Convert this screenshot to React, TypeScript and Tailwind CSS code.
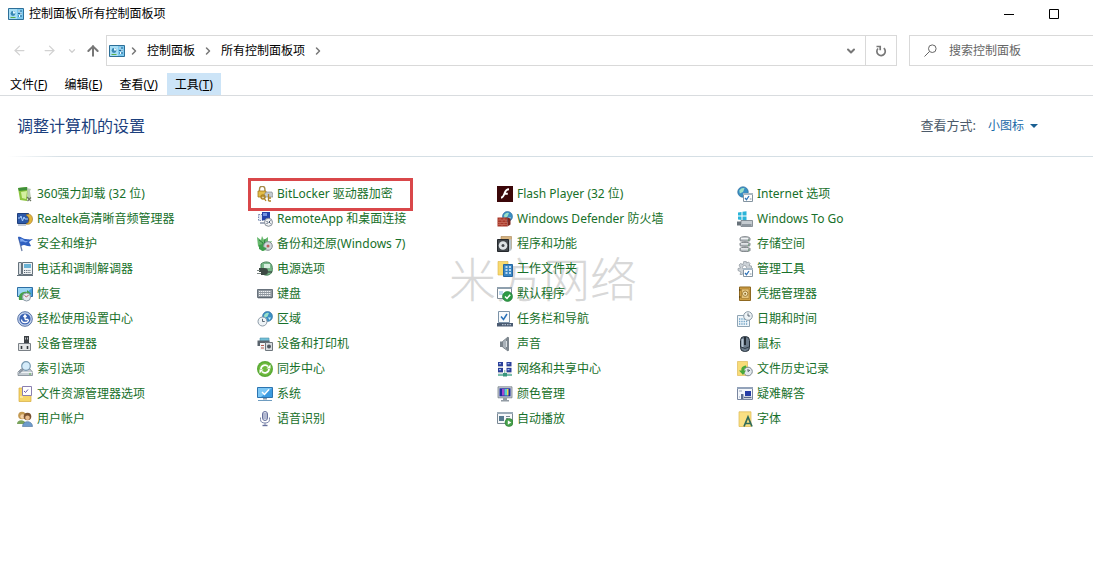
import type { ReactNode } from "react";
import { ArrowLeft, ArrowRight, ArrowUp, ChevronDown, ChevronRight } from "lucide-react";

interface PanelItem {
    name: string;
    icon: ReactNode;
    highlighted?: boolean;
}

/* Shared icon parts, all drawn on a 16x16 grid */
const Globe = ({ cx, cy, r }: { cx: number; cy: number; r: number }) => (
    <g>
        <circle cx={cx} cy={cy} r={r} fill="#3b8fc4" stroke="#2a6a98" strokeWidth="0.6" />
        <path d={`M${cx - r * 0.7} ${cy - r * 0.3}q${r * 0.5} ${-r * 0.6} ${r} ${-r * 0.4}l${-r * 0.3} ${r * 0.7}l${-r * 0.6} ${r * 0.3}z`} fill="#9be0c8" />
        <path d={`M${cx + r * 0.1} ${cy + r * 0.2}l${r * 0.6} 0l${-r * 0.3} ${r * 0.5}z`} fill="#c8eef5" />
    </g>
);

const Clock = ({ cx, cy, r }: { cx: number; cy: number; r: number }) => (
    <g>
        <circle cx={cx} cy={cy} r={r} fill="#eef3f6" stroke="#8b9aa6" strokeWidth="1" />
        <path d={`M${cx} ${cy - r * 0.6}V${cy}H${cx + r * 0.5}`} fill="none" stroke="#4b5a68" strokeWidth="0.9" />
    </g>
);

const CheckSheet = () => (
    <g>
        <path d="M6.5 7.5h9v8h-9z" fill="#fff" stroke="#8494a0" />
        <path d="M6 7h10v2H6z" fill="#a9b8c4" />
        <path d="M8 12l1.5 1.7L12 10" fill="none" stroke="#2c72b8" strokeWidth="1.2" />
        <path d="M12.8 13h1.7" stroke="#8494a0" />
    </g>
);

const ControlPanelIcon = () => (
    <svg viewBox="0 0 16 12" className="h-3 w-4 shrink-0">
        <path d="M.5.5h15v11H.5z" fill="#7cc8ee" stroke="#2d6f98" />
        <path d="M1 1h8v10H1z" fill="#a8def5" />
        <circle cx="5" cy="5.5" r="2.4" fill="#3988b4" />
        <path d="M5 5.5V3a2.5 2.5 0 0 1 2.4 2.5z" fill="#e8f8ff" />
        <path d="M10 3h4M10 5.5h4M10 8h4" stroke="#246590" strokeWidth="1.2" />
        <path d="M11 2v2M13 4.500v2M11.500 7v2" stroke="#fff" />
        <path d="M2.500 9.500h5" stroke="#5eb04c" />
    </svg>
);

const icons = {
    uninstall: (
        <>
            <path d="M1 2l9-1 1 4-1 10-7-1z" fill="#8cc63f" />
            <path d="M1 2l9-1 1 3-9 1z" fill="#3f8f3a" />
            <path d="M4 6l6-1-1 8-4-1z" fill="#d4f0a0" />
            <path d="M10 2l4 1-1 2 1 7-3 2z" fill="#b9cbb2" />
            <path d="M10 11l4 4M14 11.5L10.5 15" stroke="#69755f" strokeWidth="1.2" />
        </>
    ),
    realtek: (
        <>
            <path d="M.5 2.500h11v10H.5z" fill="#2d59a8" stroke="#1f3f7c" />
            <path d="M1 7h2l1-2 1.5 5L7 6l1 2h3" fill="none" stroke="#a9d0ff" />
            <path d="M9 4c3-2 6.500 0 6.500 4s-3 6-6.500 5c2-1 3-2 3-4S11 5 9 4z" fill="#e2b53c" stroke="#9a6f1c" strokeWidth="0.6" />
            <path d="M1 14h8" stroke="#8a97ad" />
        </>
    ),
    flag: (
        <>
            <path d="M1.500 1l3.500 14" stroke="#6a7ea8" strokeWidth="1.300" />
            <path d="M1 1c3-1 4 2 7 2 2 0 4 1 8 0l-4 3 2 4c-3 1-5-1-7-1S5 10 4 10z" fill="#2f5fc0" />
            <path d="M3 3c3-1 3 1 5 2 2 0 3 0 4-.5L9 6.500C6 6 6 5 3.500 6z" fill="#7fa8ee" />
        </>
    ),
    phone: (
        <>
            <path d="M1.500 1.500h3v12h-3z" fill="#d8dee3" stroke="#66727c" />
            <path d="M5.500 1.500h10v12h-10z" fill="#eef1f3" stroke="#66727c" />
            <path d="M7 3h7v4H7z" fill="#6bb3d6" />
            <path d="M7 9.500h7M7 11.500h7" stroke="#53616e" strokeDasharray="1.200 1" />
            <path d="M0 14.500h16" stroke="#66727c" />
        </>
    ),
    recovery: (
        <>
            <path d="M.5 1.500h15v9H.5z" fill="#4a9fdc" stroke="#2e6ea4" />
            <path d="M1 2h14L6 10H1z" fill="#9bd5f5" />
            <path d="M2 14c-1-5 2-9 8-8V4l4 3.500L10 11V9C7 8.500 5 10 6 14z" fill="#46a04a" />
            <circle cx="9.500" cy="11" r="4" fill="#e4ecef" stroke="#8b9aa6" />
            <path d="M7.500 9.500l2 1.500 2-2" fill="none" stroke="#b0565c" />
        </>
    ),
    ease: (
        <>
            <circle cx="8" cy="8" r="7.300" fill="#c9d7ef" stroke="#5570a4" />
            <circle cx="8" cy="8" r="5.600" fill="#3a62b4" />
            <path d="M8 4v4.500M6.500 6L8 4l1.500 2M4.500 8.500a3.500 3 0 0 0 7 0M8 8.500h3" fill="none" stroke="#fff" strokeWidth="1.300" />
        </>
    ),
    device: (
        <>
            <path d="M7 0h5v8H7z" fill="#3d4145" />
            <path d="M8.500 1.500v2M10.500 1.500v2" stroke="#b8bdc2" />
            <path d="M1.500 7.500h12v7h-12z" fill="#e3e5e6" stroke="#7a8086" />
            <path d="M4.500 10v3M10.500 10v3" stroke="#33383d" strokeWidth="1.600" fill="none" />
        </>
    ),
    indexing: (
        <>
            <path d="M1 11l3-3h9l2.500 3v3.500H1z" fill="#c4ccd2" stroke="#7b8790" strokeWidth="0.800" />
            <path d="M1 11.500h14.500" stroke="#eef2f4" />
            <circle cx="9" cy="5" r="4.300" fill="#d5ecfa" stroke="#7798b0" strokeWidth="1.200" />
            <path d="M6.200 8L2 12" stroke="#8994a0" strokeWidth="1.800" />
            <path d="M12 13h2" stroke="#58b04a" />
        </>
    ),
    folderOptions: (
        <>
            <path d="M2 2h6l1 2h5v11.500H2z" fill="#f6d668" stroke="#d6aa3c" strokeWidth="0.700" />
            <path d="M5.500.5h9v9h-9z" fill="#fff" stroke="#8a7fb0" />
            <path d="M7 5l1.500 1.500L11 3.500" fill="none" stroke="#6a56a8" />
            <path d="M3 11h3" stroke="#fff6c8" />
        </>
    ),
    users: (
        <>
            <circle cx="5" cy="4.500" r="3.800" fill="#c49a52" />
            <circle cx="5.500" cy="5.500" r="2.200" fill="#f2cfa4" />
            <path d="M0 13c0-5 8-5 9 0z" fill="#7aa35c" />
            <circle cx="10.500" cy="5.500" r="3.800" fill="#7a5230" />
            <circle cx="10.500" cy="6.800" r="2.300" fill="#e9bc8c" />
            <path d="M5.500 15.500c0-6.500 10-6.500 10 0z" fill="#6f9ccc" stroke="#4b719c" strokeWidth="0.600" />
        </>
    ),
    bitlocker: (
        <>
            <path d="M2.500 5V3a2.700 2.700 0 0 1 5.400 0v2" fill="none" stroke="#a58a48" strokeWidth="1.400" />
            <path d="M1 5h8v6H1z" fill="#e2bc48" stroke="#a47a1e" strokeWidth="0.800" />
            <path d="M7 9l2-3h6l1 3v2H7z" fill="#c3cad0" stroke="#757e86" strokeWidth="0.600" />
            <circle cx="6" cy="11" r="2" fill="none" stroke="#ad8425" strokeWidth="1.300" />
            <path d="M7 12l2 3M11.500 8v7M11.500 12H14M11.500 15H14" stroke="#ad8425" strokeWidth="1.300" />
        </>
    ),
    remote: (
        <>
            <path d="M1.500 3.500h7v6h-7z" fill="#dbe4f4" stroke="#7b8cb0" strokeDasharray="1.500 1" />
            <path d="M5 1h8v8H5z" fill="#2442a8" />
            <path d="M6 2h4v3H6z" fill="#7394e2" />
            <path d="M3 12h6" stroke="#8893a8" strokeWidth="1.500" />
            <circle cx="11.500" cy="11.300" r="4" fill="#eef0f2" stroke="#868e98" />
            <path d="M9.500 10l1.500 1.500-1.500 1.500M13.500 9.500L12 11l1.500 1.500" fill="none" stroke="#4b5a70" />
        </>
    ),
    backup: (
        <>
            <path d="M0 1l4 3 1-4 2 4 4-3v5l4-1-5 9-5 1-4-5z" fill="#66b86c" />
            <path d="M2 4l4 3-1 5M8 3L7 9" fill="none" stroke="#2f8040" />
            <circle cx="11" cy="10" r="4.300" fill="#d3dadd" stroke="#828c92" />
            <circle cx="11" cy="10" r="1.500" fill="#bd5c58" />
            <path d="M2 9l4-1v3l4 1-4 3-4-2z" fill="#3d9b4b" />
        </>
    ),
    power: (
        <>
            <path d="M4 3c3-3 10-3 11 2s0 8-4 9-7-2-7-5z" fill="#79b98a" stroke="#49835a" />
            <path d="M7 3h6v4H7z" fill="#d8efe0" />
            <path d="M2 7h5c3 0 4 1 4 3.500S10 14 7 14H4v-3H2z" fill="#3d4a44" />
            <path d="M0 9.500h3M0 12.500h4" stroke="#7c8783" />
            <path d="M11 11h4" stroke="#3d4a44" strokeWidth="1.300" />
        </>
    ),
    keyboard: (
        <>
            <path d="M.5 3.500h15v8H.5z" fill="#8e969e" stroke="#68727c" />
            <path d="M2 5.500h12M2 7.500h12M2 9.500h12" stroke="#eef0f2" strokeWidth="1.200" strokeDasharray="1.400 0.600" />
            <path d="M1 11.800h14" stroke="#5a646e" />
        </>
    ),
    region: (
        <>
            <Globe cx={10.5} cy={5.5} r={5} />
            <Clock cx={5.5} cy={10.5} r={4.5} />
        </>
    ),
    printers: (
        <>
            <path d="M3 2h9v4H3z" fill="#72bfd8" stroke="#4a90a8" strokeWidth="0.600" />
            <path d="M.5 4.500h12V10H.5z" fill="#59636c" />
            <path d="M3 7h6v7H3z" fill="#f0f2f3" />
            <path d="M8.500 6.500h7v8h-7z" fill="#d8dcdf" stroke="#6e767d" />
            <circle cx="12" cy="10.500" r="2" fill="#4e575f" />
            <path d="M4 9.500h3M4 12h3" stroke="#b35a50" />
        </>
    ),
    sync: (
        <>
            <circle cx="8" cy="8" r="8" fill="#5aab35" />
            <circle cx="8" cy="8" r="6.500" fill="#70b93f" />
            <path d="M4 8a4 4 0 0 1 7-2.500M12 8a4 4 0 0 1-7 2.500" fill="none" stroke="#fff" strokeWidth="1.800" />
            <path d="M9.500 7.500h4V3.500zM6.500 8.500h-4v4z" fill="#fff" />
        </>
    ),
    system: (
        <>
            <path d="M.5 1.500h15v10H.5z" fill="#3d9be0" stroke="#2c74b0" />
            <path d="M1 2h14L4 11H1z" fill="#7cc7f5" />
            <path d="M5 6l2.500 2.500L12 3.500" fill="none" stroke="#fff" strokeWidth="1.400" />
            <path d="M6 12h4v1.500H6z" fill="#8a9bab" />
            <path d="M1 14.500h14" stroke="#6e9cc0" />
        </>
    ),
    speech: (
        <>
            <rect x="5.500" y=".5" width="5" height="9" rx="2.500" fill="#e6e9f4" stroke="#66709c" />
            <path d="M6 3h4M6 5h4M6 7h4" stroke="#66709c" strokeWidth="0.800" />
            <path d="M3.500 6.500v2a4.500 3.500 0 0 0 9 0v-2M8 12v2" fill="none" stroke="#7d87ac" />
            <path d="M5.500 14.500h5" stroke="#66709c" strokeWidth="1.400" />
        </>
    ),
    flash: (
        <>
            <path d="M0 0h16v16H0z" fill="#3b0709" />
            <path d="M12 3.200C8.500 3.200 8 6 7.300 8S6 11.500 4 11.800M7.500 7.700h3.300" fill="none" stroke="#fff" strokeWidth="1.900" />
        </>
    ),
    firewall: (
        <>
            <Globe cx={10.5} cy={5.5} r={5} />
            <path d="M.5 6.500h10v9H.5z" fill="#a8382a" />
            <path d="M.5 9h10M.5 11.500h10M.5 13.500h10M3 6.500V9M7 6.500V9M5 9v2.500M9 9v2.500M3 11.500v2M7 11.500v2M5 13.500v2" stroke="#d98674" strokeWidth="0.500" />
            <path d="M10.500 6.500l3 1v6l-3 2z" fill="#7c241c" />
        </>
    ),
    programs: (
        <>
            <path d="M4 .5h10.500v12H4z" fill="#d6b27e" stroke="#a88354" strokeWidth="0.600" />
            <path d="M.5 3.500h11v12H.5z" fill="#42474c" stroke="#24282c" />
            <circle cx="6" cy="9.500" r="4.300" fill="#dde2e5" />
            <circle cx="6" cy="9.500" r="1.500" fill="#42474c" />
            <path d="M12 4l2.500-1v11L12 15.500z" fill="#b8c2c8" />
        </>
    ),
    workFolders: (
        <>
            <path d="M1 .5h10V14H1z" fill="#f8da70" stroke="#dab248" strokeWidth="0.600" />
            <path d="M6.500 3.500h9v12h-9z" fill="#3886c4" stroke="#2666a0" />
            <path d="M8.500 6h2M12 6h2M8.500 9h2M12 9h2M8.500 12h2M12 12h2" stroke="#e9f5ff" strokeWidth="1.600" />
        </>
    ),
    defaults: (
        <>
            <path d="M.5 1.500h14v11H.5z" fill="#fff" stroke="#7c8a96" />
            <path d="M0 1h15v2H0z" fill="#8fa0ae" />
            <path d="M2 5h4v4H2z" fill="#bfd9ee" />
            <circle cx="10.500" cy="10.500" r="5" fill="#2d9a45" stroke="#1f7632" strokeWidth="0.600" />
            <path d="M8 10.500l2 2 3.200-3.800" fill="none" stroke="#fff" strokeWidth="1.500" />
        </>
    ),
    taskbar: (
        <>
            <path d="M1.500.5h11v11h-11z" fill="#f7fafc" stroke="#7c93a8" />
            <path d="M4 5.500l2.500 3L10 3" fill="none" stroke="#2870b8" strokeWidth="1.500" />
            <path d="M0 12h16v3.500H0z" fill="#4a5b72" />
            <path d="M5 13.700h10" stroke="#c7d4e2" strokeDasharray="1.500 1" />
        </>
    ),
    sound: (
        <>
            <path d="M3 5.500h2.500V11H3z" fill="#7b848c" />
            <path d="M5.500 5.500L11 1v14l-5.500-4z" fill="#aab2b9" stroke="#6d767e" strokeWidth="0.800" />
            <path d="M9 3l3-2v14l-3-2z" fill="#7d868e" />
            <path d="M9.500 5v6" stroke="#d8dde1" />
        </>
    ),
    network: (
        <>
            <path d="M1 1h5v4H1zM9.500 1h5v4h-5zM1 7h5v4H1zM9.500 7h5v4h-5z" fill="#2a3f98" />
            <path d="M2 2h2v1.200H2zM10.500 2h2v1.200h-2zM2 8h2v1.200H2zM10.500 8h2v1.200h-2z" fill="#9fb6f0" />
            <path d="M1 5.800h5M9.500 5.800h5M1 11.800h5M9.500 11.800h5" stroke="#8e9ab2" />
            <path d="M7.800 9v4" stroke="#79a89e" />
            <path d="M1 14h14" stroke="#4ea890" strokeWidth="1.500" />
            <path d="M6 12h4v3.500H6z" fill="#38957c" />
        </>
    ),
    color: (
        <>
            <path d="M1 .8h14v11H1z" fill="#c7cdd3" stroke="#76808a" strokeWidth="0.800" />
            <path d="M2.500 2.300h11v8h-11z" fill="#1d2aa0" />
            <path d="M5 3h2.500v6.500H5z" fill="#a546d0" />
            <path d="M7.500 3H10v6.500H7.500z" fill="#54d0d0" />
            <path d="M10 3h1.500v6.500H10z" fill="#e6d850" />
            <path d="M6 12h4v2H6zM4 14h8v1.500H4z" fill="#929ba4" />
        </>
    ),
    autoplay: (
        <>
            <path d="M.5 1.500h15v11H.5z" fill="#f6f8fa" stroke="#7a8894" />
            <path d="M0 1h16v2H0z" fill="#9cabb8" />
            <path d="M2 5h5v5H2z" fill="#57798f" />
            <path d="M9 5.500h4M9 7.500h2" stroke="#7a8894" />
            <circle cx="12" cy="11.500" r="4" fill="#46a04a" stroke="#2c7c34" strokeWidth="0.600" />
            <path d="M10.800 9.300v4.400l3.500-2.200z" fill="#fff" />
        </>
    ),
    internet: (
        <>
            <Globe cx={6} cy={6} r={5.3} />
            <CheckSheet />
        </>
    ),
    windowsToGo: (
        <>
            <path d="M1 1.500l3.500-.5v3.500H1zM5.500.800L9.500.300v4.200h-4zM1 5.500h3.500V9L1 8.500zM5.500 5.500h4v4.200l-4-.5z" fill="#2ab4d8" />
            <path d="M0 10.500h4v4H0z" fill="#68727a" />
            <path d="M4 9.500h11.500v6H4z" fill="#c5cbd0" stroke="#737c84" strokeWidth="0.800" />
            <path d="M5 13h9.500v2H5z" fill="#8d969e" />
        </>
    ),
    storage: (
        <>
            <path d="M3 2.500c0-2.500 10-2.500 10 0v2c0 1-10 1-10 0zM3 7.500C3 6 13 6 13 7.500v2c0 1-10 1-10 0zM3 12.500c0-1.500 10-1.500 10 0v2c0 1.500-10 1.500-10 0z" fill="#b5babf" stroke="#686e74" strokeWidth="0.800" />
            <path d="M4 2.500h7M4 7.800h7M4 12.800h7" stroke="#f2f4f5" strokeWidth="1.300" />
            <path d="M11 4h1M11 9h1M11 14h1" stroke="#4f9b54" />
        </>
    ),
    tools: (
        <>
            <path d="M7 0h2l.5 2 2-1L13 2.500l-1 2 2.500.5v2.500l-2.500.5-7 5.500L3 13.500 4 11l-3-1.500V7.500L3.500 7 2 4l1.500-1.500 2.500 1z" fill="#ccd2d7" stroke="#8b949b" strokeWidth="0.700" />
            <circle cx="7.500" cy="6.500" r="2" fill="#fff" stroke="#8b949b" strokeWidth="0.700" />
            <CheckSheet />
        </>
    ),
    credentials: (
        <>
            <path d="M2.500 1h11v13.500h-11z" fill="#cf9f45" stroke="#8f6820" />
            <path d="M4.500 3h7.500v9.500H4.500z" fill="#e6c47c" stroke="#a67b2c" strokeWidth="0.700" />
            <circle cx="8.200" cy="7.700" r="2.700" fill="#f6e6b8" stroke="#8f6820" strokeWidth="0.800" />
            <circle cx="8.200" cy="7.700" r="1" fill="#8f6820" />
            <path d="M2 4h1.500M2 11h1.500" stroke="#5e4312" strokeWidth="1.300" />
        </>
    ),
    date: (
        <>
            <path d="M.5 4.500h12v11H.5z" fill="#f0f6fa" stroke="#8fa4b4" />
            <path d="M2 8h9M2 10.500h9M2 13h9" stroke="#6fa3c6" strokeWidth="1.300" strokeDasharray="1.300 1" />
            <Clock cx={11} cy={5} r={4.3} />
        </>
    ),
    mouse: (
        <>
            <rect x="3.500" y=".5" width="9" height="15" rx="4" fill="#6c7c8c" stroke="#26303a" />
            <path d="M4.500 3h2v8h-2z" fill="#b7c5d2" />
            <path d="M8 1v8" stroke="#1c242c" strokeWidth="1.800" />
            <path d="M4 11q4 3 8 0" stroke="#303c48" fill="none" />
        </>
    ),
    history: (
        <>
            <path d="M.5.5h10v14H.5z" fill="#f8dc78" stroke="#dab248" strokeWidth="0.600" />
            <circle cx="11" cy="10.500" r="4.300" fill="#e2e8ec" stroke="#7f8a92" />
            <path d="M11 8v2.500l2-1.500" fill="none" stroke="#4b5a68" />
            <path d="M9 4.500C5 5 4 7 4.500 9.500H2L6 14l3-4.500H7C7 8 7.500 7 9.500 6.500z" fill="#48a83c" />
        </>
    ),
    troubleshoot: (
        <>
            <path d="M.5 1.500h15v12H.5z" fill="#f4f7fb" stroke="#7886a0" />
            <path d="M0 1h16v2H0z" fill="#93a3ba" />
            <path d="M8 5h6v5H8z" fill="#263ea6" />
            <path d="M7 11.500h7.500" stroke="#5b6888" strokeWidth="1.500" />
            <path d="M4 8h2.500v5H4z" fill="#5c6f90" />
            <path d="M2 5h3M2 11h1" stroke="#9aa8c0" />
        </>
    ),
    fonts: (
        <>
            <path d="M2 .8h12v14.700H2z" fill="#fae083" stroke="#dcb750" strokeWidth="0.700" />
            <path d="M7 15.500L11 6l4 9.500M8.500 12.500h5" fill="none" stroke="#2f6b58" strokeWidth="1.700" />
        </>
    ),
};

const items: PanelItem[] = [
    { name: "360强力卸载 (32 位)", icon: icons.uninstall },
    { name: "BitLocker 驱动器加密", icon: icons.bitlocker, highlighted: true },
    { name: "Flash Player (32 位)", icon: icons.flash },
    { name: "Internet 选项", icon: icons.internet },
    { name: "Realtek高清晰音频管理器", icon: icons.realtek },
    { name: "RemoteApp 和桌面连接", icon: icons.remote },
    { name: "Windows Defender 防火墙", icon: icons.firewall },
    { name: "Windows To Go", icon: icons.windowsToGo },
    { name: "安全和维护", icon: icons.flag },
    { name: "备份和还原(Windows 7)", icon: icons.backup },
    { name: "程序和功能", icon: icons.programs },
    { name: "存储空间", icon: icons.storage },
    { name: "电话和调制解调器", icon: icons.phone },
    { name: "电源选项", icon: icons.power },
    { name: "工作文件夹", icon: icons.workFolders },
    { name: "管理工具", icon: icons.tools },
    { name: "恢复", icon: icons.recovery },
    { name: "键盘", icon: icons.keyboard },
    { name: "默认程序", icon: icons.defaults },
    { name: "凭据管理器", icon: icons.credentials },
    { name: "轻松使用设置中心", icon: icons.ease },
    { name: "区域", icon: icons.region },
    { name: "任务栏和导航", icon: icons.taskbar },
    { name: "日期和时间", icon: icons.date },
    { name: "设备管理器", icon: icons.device },
    { name: "设备和打印机", icon: icons.printers },
    { name: "声音", icon: icons.sound },
    { name: "鼠标", icon: icons.mouse },
    { name: "索引选项", icon: icons.indexing },
    { name: "同步中心", icon: icons.sync },
    { name: "网络和共享中心", icon: icons.network },
    { name: "文件历史记录", icon: icons.history },
    { name: "文件资源管理器选项", icon: icons.folderOptions },
    { name: "系统", icon: icons.system },
    { name: "颜色管理", icon: icons.color },
    { name: "疑难解答", icon: icons.troubleshoot },
    { name: "用户帐户", icon: icons.users },
    { name: "语音识别", icon: icons.speech },
    { name: "自动播放", icon: icons.autoplay },
    { name: "字体", icon: icons.fonts },
];

const menus = [
    { label: "文件", accessKey: "F" },
    { label: "编辑", accessKey: "E" },
    { label: "查看", accessKey: "V" },
    { label: "工具", accessKey: "T", active: true },
];

const Crumb = ({ children }: { children: string }) => (
    <>
        <ChevronRight className="mx-[3px] h-3 w-3 text-[#777]" strokeWidth={3} />
        <a href="#" className="px-1 text-black">
            {children}
        </a>
    </>
);

const App = () => {
    return (
        <div className="min-h-screen bg-white font-['Noto_Sans','Noto_Sans_CJK_SC',sans-serif] text-xs text-black">
            {/* Title bar */}
            <header className="flex h-7 items-center pl-2">
                <ControlPanelIcon />
                <h1 className="ml-[5px] flex-1">控制面板\所有控制面板项</h1>
                <button aria-label="最小化" className="flex h-7 w-[45px] items-center justify-center">
                    <svg viewBox="0 0 10 10" className="h-[10px] w-[10px]">
                        <path d="M0 5.500h10" stroke="#000" />
                    </svg>
                </button>
                <button aria-label="最大化" className="mr-[17px] flex h-7 w-[45px] items-center justify-center">
                    <svg viewBox="0 0 10 10" className="h-[10px] w-[10px]">
                        <path d="M.5.5h9v9h-9z" fill="none" stroke="#000" />
                    </svg>
                </button>
            </header>

            {/* Address bar */}
            <div className="flex pt-[7px]">
                <nav aria-label="导航" className="flex w-[106px] shrink-0 items-center pl-3">
                    <button aria-label="后退" className="w-[30px] text-[#d2d2d2]">
                        <ArrowLeft className="h-[15px] w-[15px]" />
                    </button>
                    <button aria-label="前进" className="w-[25px] text-[#d2d2d2]">
                        <ArrowRight className="h-[15px] w-[15px]" />
                    </button>
                    <button aria-label="最近位置" className="w-[18px] text-[#cfcfcf]">
                        <ChevronDown className="h-[10px] w-[10px]" strokeWidth={3} />
                    </button>
                    <button aria-label="向上" className="text-[#777]">
                        <ArrowUp className="h-4 w-4" strokeWidth={3} />
                    </button>
                </nav>
                <div className="flex h-[31px] flex-1 items-center border border-[#d9d9d9] pl-[2px]">
                    <ControlPanelIcon />
                    <Crumb>控制面板</Crumb>
                    <Crumb>所有控制面板项</Crumb>
                    <ChevronRight className="mx-[3px] h-3 w-3 text-[#777]" strokeWidth={3} />
                    <button aria-label="以前的位置" className="ml-auto flex w-[29px] justify-center text-[#777]">
                        <ChevronDown className="h-3 w-3" strokeWidth={4} />
                    </button>
                    <button aria-label="刷新" className="flex h-full w-[31px] items-center justify-center border-l border-[#d9d9d9]">
                        <svg viewBox="0 0 12 12" className="h-3 w-3" fill="none" stroke="#777" strokeWidth="1.700">
                            <path d="M8.800 3.200A4.200 4.200 0 1 1 3 3.500" />
                            <path d="M1.500 1.500h3.700v3.700" />
                        </svg>
                    </button>
                </div>
                <label className="ml-3 flex h-[31px] w-[184px] items-center border border-r-0 border-[#d9d9d9] pl-[14px]">
                    <svg viewBox="0 0 13 13" className="h-[13px] w-[13px] shrink-0" fill="none" stroke="#666">
                        <circle cx="8.300" cy="4.700" r="3.800" />
                        <path d="M5.500 7.500L.5 12.500" />
                    </svg>
                    <input type="text" aria-label="搜索控制面板" placeholder="搜索控制面板" className="ml-3 w-full bg-transparent outline-none placeholder:text-[#666]" />
                </label>
            </div>

            {/* Menu bar */}
            <nav aria-label="菜单" className="flex h-[30px] items-end border-b border-[#d9dcdf] pl-[2px]">
                {menus.map((menu) => (
                    <button key={menu.label} className={`mr-px h-[22px] px-2 pt-px ${menu.active ? "bg-[#cce4f7]" : ""}`}>
                        {menu.label}(<span className="underline">{menu.accessKey}</span>)
                    </button>
                ))}
            </nav>

            <main>
                <div className="flex h-[60px] items-center justify-between pr-[55px] pl-[17px]">
                    <h2 className="text-base text-[#1b3f7d]">调整计算机的设置</h2>
                    <div className="flex items-center">
                        <label htmlFor="view-by" className="mr-3 text-[13px] text-[#4c5a6a]">
                            查看方式:
                        </label>
                        <div className="relative">
                            <select id="view-by" className="w-[50px] appearance-none bg-transparent text-[#1a6aa8] outline-none">
                                <option>小图标</option>
                                <option>大图标</option>
                                <option>类别</option>
                            </select>
                            <svg viewBox="0 0 8 4" className="pointer-events-none absolute top-[6px] right-0 h-1 w-2">
                                <path d="M0 0h8L4 4z" fill="#1a5f92" />
                            </svg>
                        </div>
                    </div>
                </div>
                <div className="ml-2 h-px bg-linear-to-r from-white via-[#d5dfe5] via-5% to-[#d5dfe5]" />

                {/* All control panel items */}
                <section className="relative pt-6 pl-[17px]">
                    <div aria-hidden="true" className="pointer-events-none absolute inset-x-0 top-24 pr-[7px] text-center font-['Noto_Sans_CJK_SC',sans-serif] text-[47px] leading-none font-light text-[#d8d8d8]">
                        米方网络
                    </div>
                    <ul className="relative grid grid-cols-[repeat(auto-fill,240px)]">
                        {items.map((item) => (
                            <li key={item.name} className="relative flex h-[25px] items-center">
                                <a href="#" className="flex items-center gap-1 whitespace-nowrap text-[#17702a]">
                                    <svg viewBox="0 0 16 16" className="h-4 w-4 shrink-0">
                                        {item.icon}
                                    </svg>
                                    {item.name}
                                </a>
                                {item.highlighted && <span className="pointer-events-none absolute -top-[3px] -left-[9px] z-10 h-[33px] w-[165px] border-3 border-[#d9474a]" />}
                            </li>
                        ))}
                    </ul>
                </section>
            </main>
        </div>
    );
};

export default App;
